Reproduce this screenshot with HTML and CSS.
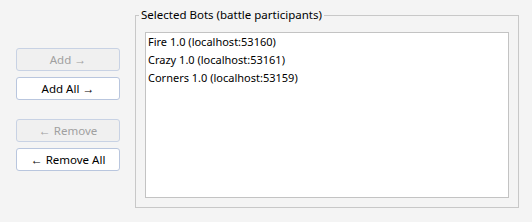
FILE: index.html
```html
<!DOCTYPE html>
<html>
<head>
    <title>Selected Bots</title>
    <link rel="stylesheet" href="styles.css">
</head>
<body>

<div id="panel">
    <div id="buttons">
        <button class="btn" disabled>Add <span class="arrow">&rarr;</span></button>
        <button class="btn">Add All <span class="arrow">&rarr;</span></button>
        <button class="btn spaced" disabled><span class="arrow">&larr;</span> Remove</button>
        <button class="btn"><span class="arrow">&larr;</span> Remove All</button>
    </div>

    <div id="selected">
        <span class="group-title">Selected Bots (battle participants)</span>
        <ul id="botList">
            <li>Fire 1.0 (localhost:53160)</li>
            <li>Crazy 1.0 (localhost:53161)</li>
            <li>Corners 1.0 (localhost:53159)</li>
        </ul>
    </div>
</div>

</body>
</html>
```

FILE: styles.css
```css
body {
    margin: 0;
    background: #f4f4f4;
    font-family: "Noto Sans", "Open Sans", sans-serif;
    font-size: 11px;
    color: #000;
}

#panel {
    display: flex;
    align-items: flex-start;
    padding: 15px 0 0 16px;
}

#buttons {
    display: flex;
    flex-direction: column;
    flex: none;
    width: 104px;
    margin-top: 33px;
}

.btn {
    height: 23px;
    margin: 0 0 6px 0;
    padding: 0;
    background: #fff;
    border: 1px solid #b9c6de;
    border-radius: 3px;
    font-family: inherit;
    font-size: 11.5px;
    color: #000;
}
.btn:disabled {
    background: #f0f0f0;
    border-color: #c8d2e4;
    color: #a0a0a0;
}
.btn.spaced { margin-top: 13px; }

.arrow {
    font-family: "Liberation Sans", sans-serif;
    font-size: 12px;
}

/* group box, title sits on the top border */
#selected {
    position: relative;
    flex: none;
    margin-left: 15px;
    padding: 16px 9px 9px 9px;
    width: 384px;
    height: 193px;
    border: 1px solid #c8c8c8;
    box-sizing: border-box;
}
.group-title {
    position: absolute;
    top: -9px;
    left: 3px;
    padding: 0 2px;
    background: #f4f4f4;
    line-height: 16px;
    font-size: 11.5px;
}

#botList {
    list-style-type: none;
    margin: 0;
    padding: 0;
    height: 100%;
    box-sizing: border-box;
    background: #fff;
    border: 1px solid #c3c3c3;
}
#botList > li {
    padding: 0 2px;
    line-height: 18px;
}
```
